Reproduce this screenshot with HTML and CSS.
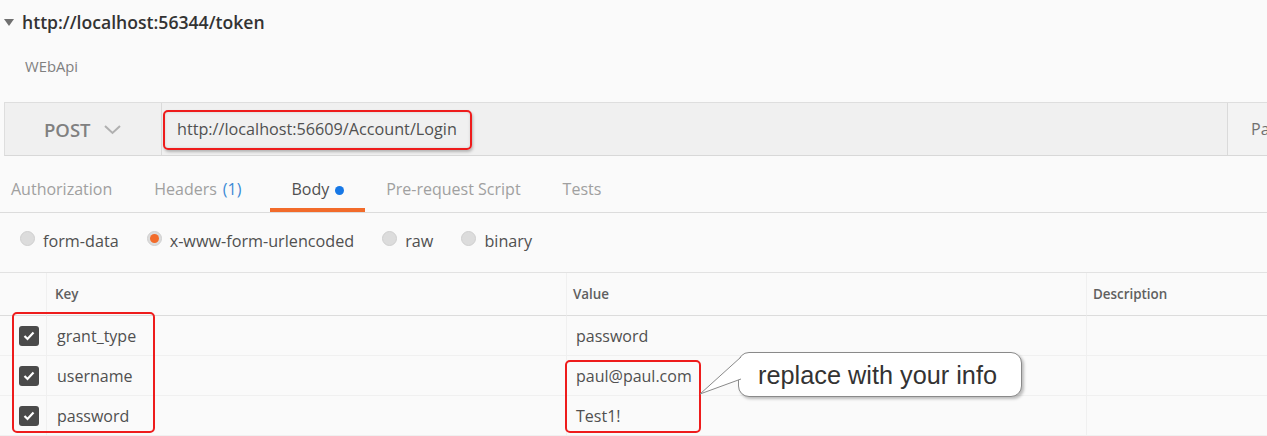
FILE: index.html
```html
<!DOCTYPE html>
<html>
<head>
<meta charset="utf-8">
<link rel="stylesheet" href="styles.css">
</head>
<body>
<div class="page">
  <div class="title-row">
    <span class="caret"></span>
    <span class="title">http://localhost:56344/token</span>
  </div>
  <div class="subtitle">WEbApi</div>

  <div class="request-bar">
    <div class="method">
      <span class="method-name">POST</span>
      <svg class="chev" width="17" height="10" viewBox="0 0 17 10"><path d="M1 1 L8.5 8 L16 1" fill="none" stroke="#b0b0b0" stroke-width="2"/></svg>
    </div>
    <div class="url-wrap">
      <span class="url">http://localhost:56609/Account/Login</span>
      <span class="hl hl-url"></span>
    </div>
    <div class="params">Pa</div>
  </div>

  <div class="tabs">
    <span class="tab">Authorization</span>
    <span class="tab">Headers <span class="count">(1)</span></span>
    <span class="tab active">Body <span class="dot"></span></span>
    <span class="tab">Pre-request Script</span>
    <span class="tab">Tests</span>
  </div>

  <div class="radios">
    <label class="radio"><span class="rb"></span>form-data</label>
    <label class="radio"><span class="rb on"></span>x-www-form-urlencoded</label>
    <label class="radio"><span class="rb"></span>raw</label>
    <label class="radio"><span class="rb"></span>binary</label>
  </div>

  <div class="table">
    <div class="cell head"></div>
    <div class="cell head">Key</div>
    <div class="cell head">Value</div>
    <div class="cell head">Description</div>

    <div class="cell chk"><span class="cb"><svg width="12" height="10" viewBox="0 0 12 10"><path d="M1.5 5 L4.5 8 L10.5 1.5" fill="none" stroke="#fff" stroke-width="2.2"/></svg></span></div>
    <div class="cell">grant_type</div>
    <div class="cell">password</div>
    <div class="cell"></div>

    <div class="cell chk"><span class="cb"><svg width="12" height="10" viewBox="0 0 12 10"><path d="M1.5 5 L4.5 8 L10.5 1.5" fill="none" stroke="#fff" stroke-width="2.2"/></svg></span></div>
    <div class="cell">username</div>
    <div class="cell">paul@paul.com</div>
    <div class="cell"></div>

    <div class="cell chk"><span class="cb"><svg width="12" height="10" viewBox="0 0 12 10"><path d="M1.5 5 L4.5 8 L10.5 1.5" fill="none" stroke="#fff" stroke-width="2.2"/></svg></span></div>
    <div class="cell">password</div>
    <div class="cell">Test1!</div>
    <div class="cell"></div>

    <span class="hl hl-keys"></span>
    <span class="hl hl-vals"></span>
    <div class="callout">
      <svg class="tail" width="44" height="40" viewBox="0 0 44 40"><path d="M42 1 L1 38 L42 23" fill="#fff" stroke="#8a8a8a" stroke-width="1"/></svg>
      <span class="callout-text">replace with your info</span>
    </div>
  </div>
</div>
</body>
</html>
```

FILE: styles.css
```css
* { box-sizing: border-box; }
html, body { margin: 0; padding: 0; }
body {
  background: #fafafa;
  font-family: "Open Sans", "Liberation Sans", sans-serif;
  color: #505050;
  width: 1267px;
  height: 436px;
  overflow: hidden;
}
.page { position: relative; }

.title-row {
  display: flex;
  align-items: center;
  height: 22px;
  margin-top: 11px;
  padding-left: 4px;
}
.caret {
  width: 0; height: 0;
  border-left: 5.5px solid transparent;
  border-right: 5.5px solid transparent;
  border-top: 7px solid #707070;
  margin-right: 8px;
}
.title {
  font-size: 17.6px;
  font-weight: 600;
  color: #333;
}
.subtitle {
  margin-top: 23px;
  padding-left: 25px;
  font-size: 14.8px;
  color: #808080;
  height: 20px;
  line-height: 20px;
}

.request-bar {
  margin-top: 26px;
  margin-left: 4px;
  height: 54px;
  display: flex;
  background: #f0f0f0;
  border-top: 1px solid #dedede;
  border-bottom: 1px solid #d8d8d8;
  border-left: 1px solid #dedede;
}
.method {
  width: 157px;
  display: flex;
  align-items: center;
  padding-left: 39px;
  border-right: 1px solid #dadada;
  flex-shrink: 0;
}
.method-name {
  font-size: 18.5px;
  font-weight: 600;
  color: #808080;
  margin-right: 13px;
}
.chev { margin-top: 2px; }
.url-wrap {
  position: relative;
  flex: 1;
  display: flex;
  align-items: center;
  padding-left: 15px;
}
.url { font-size: 16.2px; color: #505050; }
.params {
  width: 40px;
  border-left: 1px solid #dadada;
  background: #f3f3f3;
  padding-left: 23px;
  display: flex;
  align-items: center;
  font-size: 16px;
  color: #707070;
  overflow: hidden;
  white-space: nowrap;
}

.hl {
  position: absolute;
  border: 2px solid #ee1c1c;
  border-radius: 5px;
  box-shadow: 1px 2px 3px rgba(0,0,0,0.25), inset 0 0 3px rgba(0,0,0,0.12);
  pointer-events: none;
}
.hl-url { left: 1px; top: 7px; width: 309px; height: 40px; }

.tabs {
  height: 57px;
  display: flex;
  align-items: stretch;
  border-bottom: 1px solid #dcdcdc;
}
.tab {
  font-size: 16px;
  color: #a0a0a0;
  display: flex;
  align-items: center;
  padding: 14px 21px 0;
  border-bottom: 4px solid transparent;
}
.tab:first-child { padding-left: 11px; }
.tab .count { color: #3a8ad6; margin-left: 6px; margin-right: 8px; }
.tab.active { color: #505050; border-bottom-color: #f26b2a; }
.dot {
  width: 9px; height: 9px;
  border-radius: 50%;
  background: #1778e6;
  margin-left: 6px;
  margin-top: 2px;
}

.radios {
  height: 59px;
  display: flex;
  align-items: center;
  padding-left: 20px;
  padding-bottom: 3px;
}
.radio {
  display: flex;
  align-items: center;
  font-size: 16.2px;
  color: #505050;
  margin-right: 28px;
}
.rb {
  width: 15px; height: 15px;
  border-radius: 50%;
  background: #dcdcdc;
  border: 1px solid #cfcfcf;
  margin-right: 8px;
  margin-top: -5px;
  display: flex;
  align-items: center;
  justify-content: center;
}
.rb.on::after {
  content: "";
  width: 9px; height: 9px;
  border-radius: 50%;
  background: #f26b2a;
}

.table {
  position: relative;
  display: grid;
  grid-template-columns: 46px 520px 520px 1fr;
  grid-template-rows: 43px 40px 40px 40px;
  border-top: 1px solid #e2e2e2;
}
.cell {
  border-bottom: 1px solid #f0f0f0;
  border-left: 1px solid #f0f0f0;
  display: flex;
  align-items: center;
  padding-left: 10px;
  font-size: 16px;
  color: #505050;
}
.cell:nth-child(4n+1) { border-left: none; }
.cell.head {
  font-size: 13.4px;
  font-weight: 600;
  color: #606060;
  padding-left: 8px;
  border-bottom: 1px solid #dcdcdc;
}
.cell.head:nth-child(3), .cell.head:nth-child(4) { padding-left: 6px; }
.cell:nth-child(4n+3):not(.head) { padding-left: 9px; }
.cell.chk { padding-left: 19px; }
.cb {
  width: 20px; height: 20px;
  border-radius: 3px;
  background: #4a4a4a;
  display: flex;
  align-items: center;
  justify-content: center;
}

.hl-keys { left: 12px; top: 39px; width: 143px; height: 121px; box-shadow: none; }
.hl-vals { left: 565px; top: 87px; width: 136px; height: 73px; box-shadow: none; }

.callout {
  position: absolute;
  left: 738px;
  top: 79px;
  width: 284px;
  height: 45px;
  background: #fff;
  border: 1px solid #8a8a8a;
  border-radius: 11px;
  box-shadow: 2px 2px 3px rgba(0,0,0,0.25);
  display: flex;
  align-items: center;
  padding-left: 19px;
}
.tail {
  position: absolute;
  left: -40px;
  top: 3px;
}
.callout-text {
  position: relative;
  font-family: "Liberation Sans", Arial, sans-serif;
  font-size: 25.3px;
  color: #333;
  margin-top: 1px;
  white-space: nowrap;
}
```
